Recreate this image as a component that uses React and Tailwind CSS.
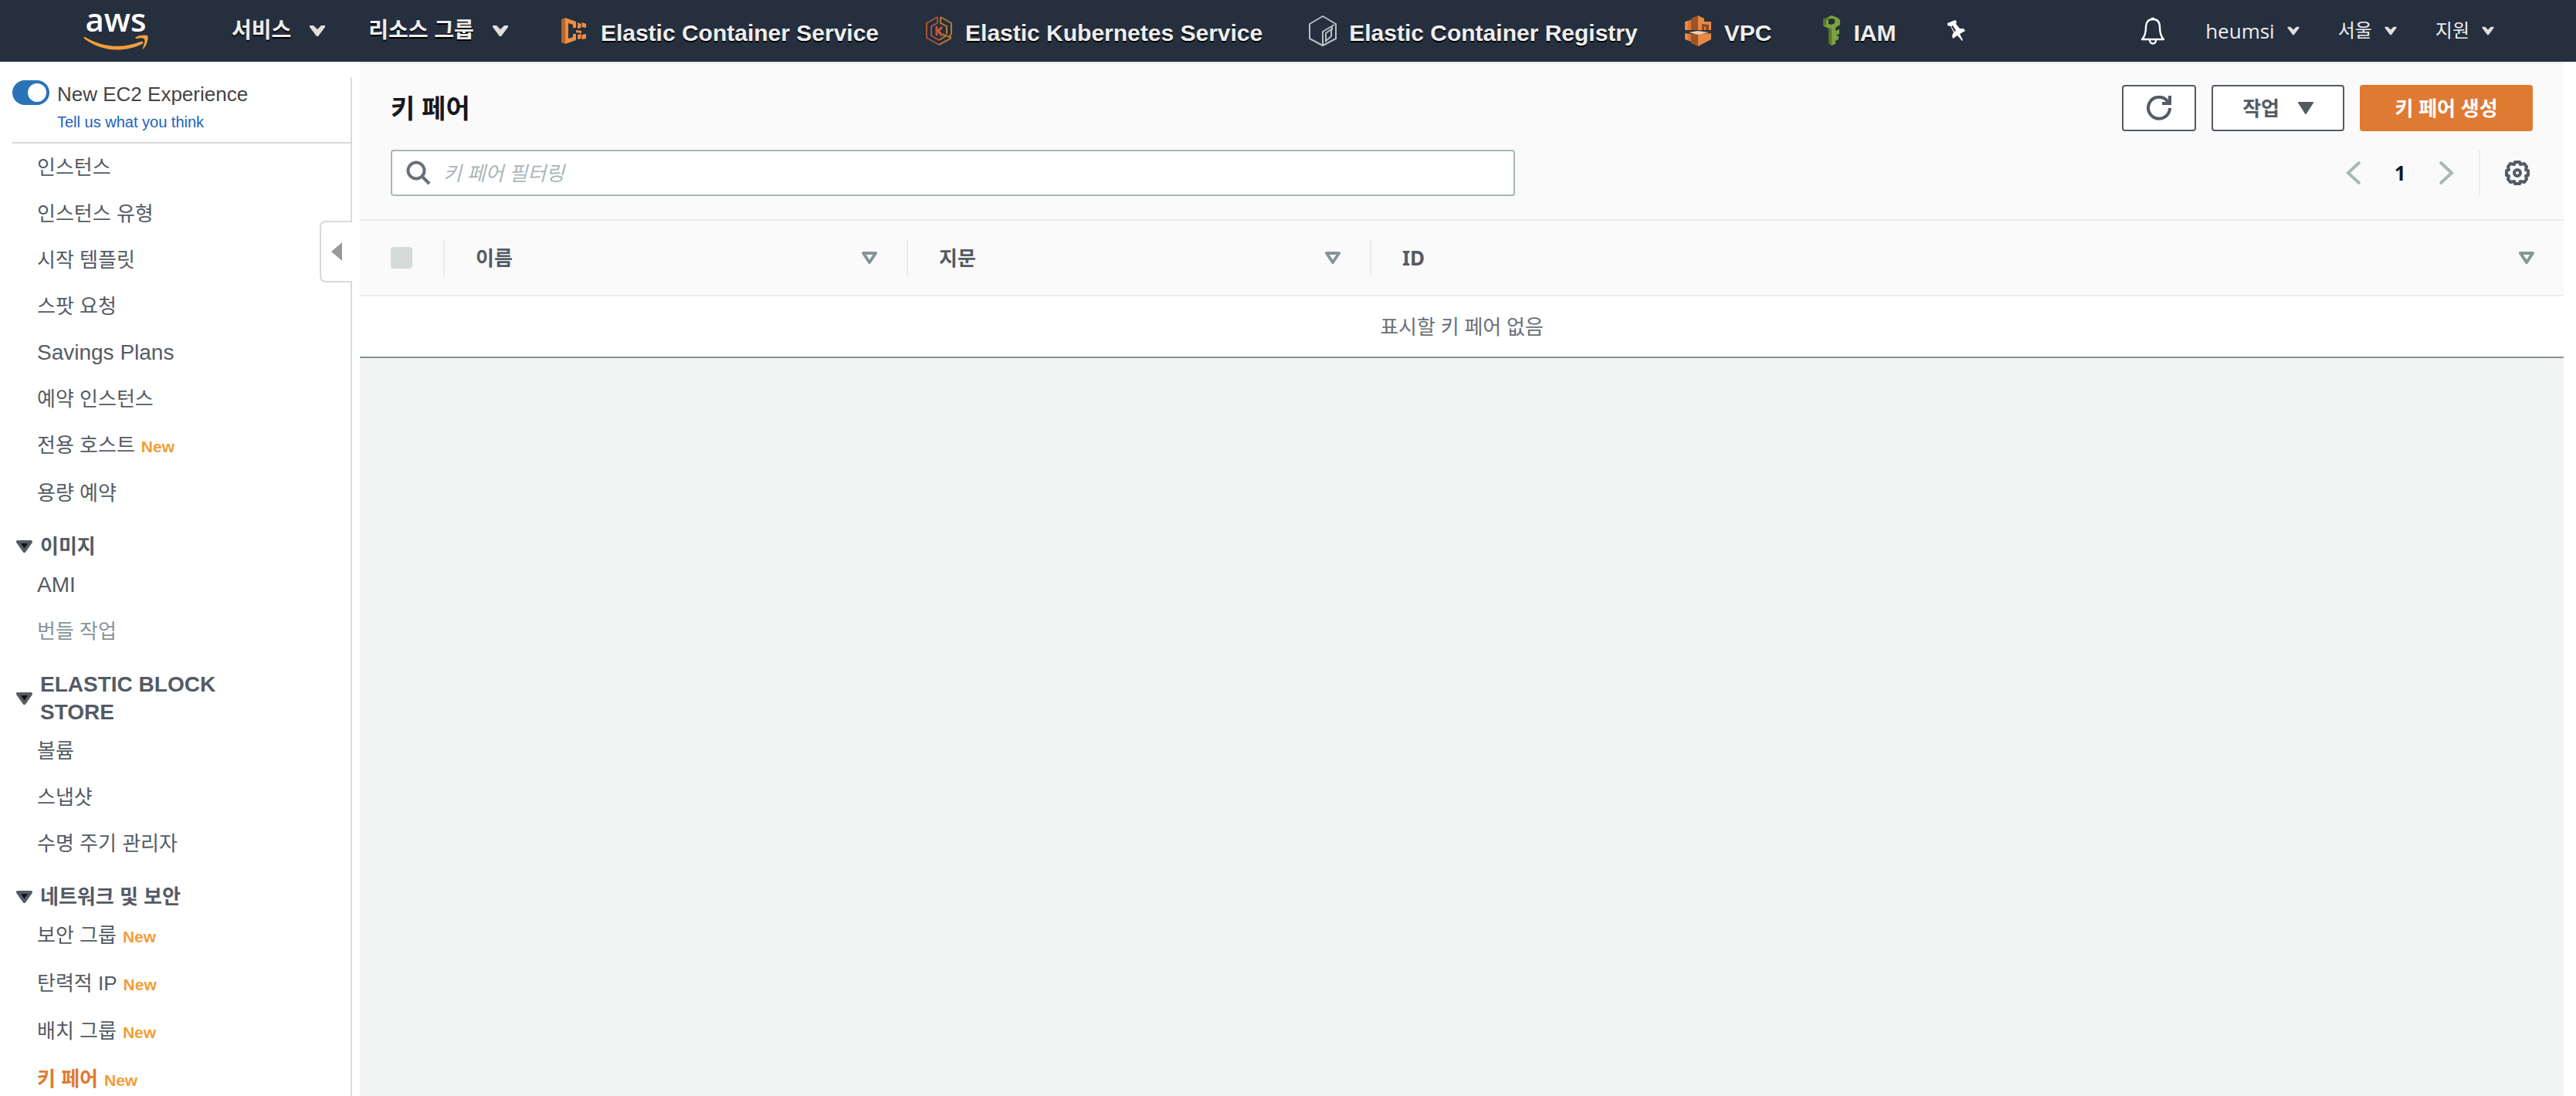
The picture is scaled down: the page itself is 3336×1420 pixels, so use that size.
import React from 'react';

const cjk = 'font-["Liberation_Sans","Noto_Sans_CJK_KR",sans-serif]';

function Caret({ small }) {
  return (
    <svg className={small ? 'h-3 w-4' : 'h-4 w-5'} viewBox="0 0 20 16" fill="#e0e0e0" aria-hidden="true">
      <path d="M0 1H5L10 6L15 1H20V3L11 15H9L0 3Z" />
    </svg>
  );
}

function AwsLogo() {
  return (
    <div className="flex h-20 w-[84px] flex-col items-center" aria-label="aws">
      <span className="h-[44px] font-['Open_Sans',sans-serif] text-[42px] font-semibold leading-[50px] text-white">aws</span>
      <svg className="h-6 w-[84px]" viewBox="0 0 84 24" fill="#f19e38" aria-hidden="true">
        <path d="M2 4C26 18 51 19 74 10C77 9 79 11 76 13C54 24 24 24 1 6C0 5 1 3 2 4Z" />
        <path d="M68 4C72 1 80 1 83 2C85 5 82 15 78 19C77 20 76 19 77 18C79 12 80 8 79 7C78 5 74 5 69 6C67 6 67 5 68 4Z" />
      </svg>
    </div>
  );
}

function EcsIcon() {
  return (
    <svg className="h-9 w-9" viewBox="0 0 36 36" aria-hidden="true">
      <path d="M1 3L6 1V35L1 33Z" fill="#b9642b" />
      <path d="M6 1L20 6V14H16V10L10 8V28L16 26V22H20V30L6 35Z" fill="#ef8d44" />
      <path d="M22 7L26 9V14L22 15ZM28 7L33 9V14L28 13ZM20 17L27 18V21L20 20ZM22 23L26 22V28L22 29ZM28 23L33 22V28L28 29Z" fill="#ef8d44" />
      <path d="M26 9L28 7V13L26 14ZM26 22L28 23V29L26 28Z" fill="#a4572a" />
    </svg>
  );
}

function EksIcon() {
  return (
    <svg className="h-10 w-9" viewBox="0 0 36 40" fill="none" strokeWidth="2" aria-hidden="true">
      <path d="M16 2L2 10V29L18 38" stroke="#a4553a" />
      <path d="M20 2L34 10V24L31 28L26 25M18 38L33 30V27" stroke="#b5772f" />
      <path d="M16 2V10L8 14V26L18 32" stroke="#a4553a" />
      <path d="M20 2V10L28 14V24M18 32L26 27L23 24" stroke="#b5772f" />
      <path d="M15 14V26" stroke="#c9502f" strokeWidth="3" />
      <path d="M22 15L17 20L22 26" stroke="#c9602f" strokeWidth="3" />
    </svg>
  );
}

function EcrIcon() {
  return (
    <svg className="h-10 w-9" viewBox="2 0 36 40" fill="none" stroke="#b9bec5" strokeWidth="2" strokeLinejoin="round" aria-hidden="true">
      <path d="M20 1L37 11V30L20 39L3 30V11Z" />
      <path d="M20 38V21L35 12M24 34V23L31 18V27L23 34M32 14V19" />
    </svg>
  );
}

function VpcIcon() {
  return (
    <svg className="h-10 w-9" viewBox="0 0 36 40" aria-hidden="true">
      <path d="M1 8L9 6V19H1ZM18 0L26 4V8L35 8V19H18ZM1 23L9 24V34L1 31ZM18 24L35 23V31L18 40Z" fill="#ea8743" />
      <path d="M18 0L9 4V19H18ZM9 24H18V40L9 36Z" fill="#9b5429" />
      <path d="M5 7L9 6V19H5ZM5 24H9V34L5 32Z" fill="#d67638" />
      <path d="M23 11L32 12V19H28V15L26 14V19H23Z" fill="#8a4a25" />
      <path d="M1 20H35V22H1Z" fill="#3a3538" />
      <path d="M6 22L18 20L32 22L18 25Z" fill="#f3cdb3" />
    </svg>
  );
}

function IamIcon() {
  return (
    <svg className="h-10 w-6" viewBox="0 0 24 40" aria-hidden="true">
      <path fillRule="evenodd" d="M12 0L20 3L23 6V12L17 16V20L22 18V24L18 25L21 27V31L17 33V37L12 39L8 36V17L1 13V5ZM8 5V11L12 12L16 10V5L12 4Z" fill="#7ba03f" />
      <path d="M8 16L12 17V39L8 36ZM1 5L8 2V5L5 6V13L1 12Z" fill="#56762f" />
    </svg>
  );
}

function PinIcon() {
  return (
    <svg className="h-7 w-6" viewBox="0 0 24 28" fill="#fff" aria-hidden="true">
      <path d="M1 4L11 0L13 2L12 5L17 11L22 11L24 14L17 18L21 26L20 27L14 20L8 24L7 20L9 16L5 8L1 7Z" />
      <path d="M6 8L8 7L12 14L10 15Z" fill="#27303f" />
    </svg>
  );
}

const services = [
  ['Elastic Container Service', EcsIcon, 'mr-[60px]'],
  ['Elastic Kubernetes Service', EksIcon, 'mr-[60px]'],
  ['Elastic Container Registry', EcrIcon, 'mr-[60px]'],
  ['VPC', VpcIcon, 'mr-[66px]'],
  ['IAM', IamIcon, 'mr-[66px]'],
];

const shadow = '[text-shadow:0_2px_0_#000]';

function Header() {
  return (
    <header className={`flex h-20 shrink-0 items-center bg-[#252f3e] text-[#eee] ${cjk}`}>
      <a href="#home" className="ml-[108px] mr-[108px]"><AwsLogo /></a>
      <button className={`mr-14 flex items-center gap-6 text-[28px] font-bold ${shadow}`}>서비스 <Caret /></button>
      <button className={`mr-[68px] flex items-center gap-6 text-[28px] font-bold ${shadow}`}>리소스 그룹 <Caret /></button>
      {services.map(([name, Icon, gap]) => (
        <a key={name} href="#service" className={`flex items-center gap-4 whitespace-nowrap text-[30px] font-bold ${shadow} ${gap}`}>
          <Icon />
          <span className="pt-1">{name}</span>
        </a>
      ))}
      <button aria-label="Pin"><PinIcon /></button>
      <div className={`ml-auto mr-[106px] flex items-center text-[26px] ${shadow}`}>
        <button aria-label="Notifications" className="mr-[52px]">
          <svg className="h-9 w-8" viewBox="0 0 32 36" fill="none" stroke="#fff" strokeWidth="2.4" strokeLinejoin="round">
            <path d="M16 3C10 3 7 7 7 13C7 22 5 26 2 29H30C27 26 25 22 25 13C25 7 22 3 16 3Z" />
            <path d="M14 2H18M12 30C12 36 20 36 20 30" />
          </svg>
        </button>
        <button className="mr-[50px] flex items-center gap-4 font-['Open_Sans',sans-serif]">heumsi <Caret small /></button>
        <button className="mr-[50px] flex items-center gap-4 text-[24px]">서울 <Caret small /></button>
        <button className="flex items-center gap-4 text-[24px]">지원 <Caret small /></button>
      </div>
    </header>
  );
}

function NavItem({ label, latin, isNew, active, muted }) {
  const tone = active ? 'font-bold text-[#df7a32]' : muted ? 'text-[#879596]' : 'text-[#545b64]';
  return (
    <li className={isNew ? 'h-[62px]' : 'h-[60px]'}>
      <a href="#nav" className={`flex items-baseline gap-2 pl-12 leading-10 ${latin ? 'text-[28px]' : 'text-[26px]'} ${tone}`}>
        {label}
        {isNew && <span className="text-[21px] font-bold text-[#f29d38]">New</span>}
      </a>
    </li>
  );
}

function NavGroup({ title, latin, items }) {
  return (
    <section>
      {title && (
        <button className={`mb-3 mt-[11px] flex w-[330px] items-center gap-[10px] pl-[21px] text-left font-bold leading-9 text-[#545b64] ${latin ? 'text-[28px]' : 'text-[26px]'}`}>
          <svg className="h-4 w-[21px] shrink-0" viewBox="0 0 21 16" aria-hidden="true">
            <path d="M2 2H19L10.5 14Z" fill="#111" stroke="#545b64" strokeWidth="4" strokeLinejoin="round" />
          </svg>
          {title}
        </button>
      )}
      <ul>
        {items.map((item) => <NavItem key={item.label} {...item} />)}
      </ul>
    </section>
  );
}

const groups = [
  {
    items: [
      { label: '인스턴스' }, { label: '인스턴스 유형' }, { label: '시작 템플릿' }, { label: '스팟 요청' },
      { label: 'Savings Plans', latin: true }, { label: '예약 인스턴스' }, { label: '전용 호스트', isNew: true }, { label: '용량 예약' },
    ],
  },
  { title: '이미지', items: [{ label: 'AMI', latin: true }, { label: '번들 작업', muted: true }] },
  { title: 'ELASTIC BLOCK STORE', latin: true, items: [{ label: '볼륨' }, { label: '스냅샷' }, { label: '수명 주기 관리자' }] },
  {
    title: '네트워크 및 보안',
    items: [
      { label: '보안 그룹', isNew: true }, { label: '탄력적 IP', isNew: true },
      { label: '배치 그룹', isNew: true }, { label: '키 페어', isNew: true, active: true },
    ],
  },
];

function Sidebar() {
  return (
    <aside className={`relative mr-[10px] mt-5 w-[456px] shrink-0 border-r-2 border-[#d9d9d9] bg-white ${cjk}`}>
      <div className="ml-4 flex h-[86px] items-start gap-[10px] border-b-2 border-[#d9d9d9] pt-1">
        <input
          id="experience"
          type="checkbox"
          role="switch"
          defaultChecked
          className="h-8 w-12 shrink-0 appearance-none rounded-full bg-[#2b73b7] before:ml-5 before:mt-1 before:block before:size-6 before:rounded-full before:bg-white"
        />
        <div>
          <label htmlFor="experience" className="block text-[26px] leading-9 text-[#444]">New EC2 Experience</label>
          <a href="#feedback" className="block text-[20px] leading-9 text-[#1b62c0]">Tell us what you think</a>
        </div>
      </div>
      <nav className="pt-[11px]">
        {groups.map((group, i) => <NavGroup key={i} {...group} />)}
      </nav>
      <button aria-label="Collapse" className="absolute -right-0.5 top-[186px] flex h-20 w-[42px] items-center justify-center rounded-l-lg border-2 border-r-0 border-[#d9d9d9] bg-white">
        <svg className="h-6 w-4" viewBox="0 0 16 24" fill="#999"><path d="M15 0V24L1 12Z" /></svg>
      </button>
    </aside>
  );
}

function SortIcon() {
  return (
    <svg className="h-4 w-5" viewBox="0 0 20 16" fill="none" stroke="#879596" strokeWidth="4" strokeLinejoin="round">
      <path d="M2 2H18L10 14Z" />
    </svg>
  );
}

function HeadCell({ label, width }) {
  return (
    <th scope="col" className={`py-6 font-bold ${width || ''}`}>
      <div className="flex h-12 items-center justify-between border-l-2 border-[#eaeded] pl-10 pr-[38px]">
        {label}
        <button aria-label={`${label} 정렬`}><SortIcon /></button>
      </div>
    </th>
  );
}

function KeyPairs() {
  return (
    <main className='mr-4 flex min-w-0 grow flex-col bg-[#f2f4f4] font-["Noto_Sans","Noto_Sans_CJK_KR",sans-serif]'>
      <section className="border-t-2 border-[#eaeded] bg-[#fafafa] text-[#545b64]">
        <div className="flex items-center gap-5 px-10 pt-7">
          <h1 className="grow text-[34px] font-bold leading-[60px] text-[#16191f]">키 페어</h1>
          <button aria-label="새로 고침" className="flex h-[60px] w-24 items-center justify-center rounded-sm border-2 border-[#545b64] bg-white">
            <svg className="h-8 w-8" viewBox="0 0 32 32" fill="none" stroke="#545b64" strokeWidth="4">
              <path d="M30 16A14 14 0 1 1 25 5L30 10" /><path d="M30 0V10H20" />
            </svg>
          </button>
          <button className="flex h-[60px] w-[172px] items-center justify-center gap-6 rounded-sm border-2 border-[#545b64] bg-white text-[26px] font-bold">
            작업
            <svg className="h-4 w-5" viewBox="0 0 20 16" fill="#545b64" stroke="#545b64" strokeWidth="2" strokeLinejoin="round"><path d="M1 1H19L10 15Z" /></svg>
          </button>
          <button className="h-[60px] w-56 rounded-sm bg-[#df7a32] text-[26px] font-bold text-white">키 페어 생성</button>
        </div>
        <div className="flex items-center justify-between px-10 pb-[30px] pt-6">
          <label className="flex h-[60px] w-[52.5%] items-center gap-4 rounded-sm border-2 border-[#aab7b8] bg-white pl-[18px]">
            <svg className="h-8 w-8" viewBox="0 0 32 32" fill="none" stroke="#687078" strokeWidth="4"><circle cx="13" cy="13" r="10.5" /><path d="M20 20L30 30" /></svg>
            <input aria-label="키 페어 필터링" placeholder="키 페어 필터링" className="min-w-0 grow text-[26px] italic outline-none placeholder:text-[#aab7b8]" />
          </label>
          <div className="flex h-[60px] items-center">
            <button aria-label="이전">
              <svg className="h-8 w-5" viewBox="0 0 20 32" fill="none" stroke="#aab7b8" strokeWidth="4"><path d="M18 2L3 16L18 30" /></svg>
            </button>
            <span className="w-[100px] text-center text-[26px] font-bold text-[#16191f]">1</span>
            <button aria-label="다음">
              <svg className="h-8 w-5" viewBox="0 0 20 32" fill="none" stroke="#aab7b8" strokeWidth="4"><path d="M2 2L17 16L2 30" /></svg>
            </button>
            <button aria-label="설정" className="ml-8 flex h-[60px] items-center border-l-2 border-[#eaeded] pl-8 pr-1">
              <svg className="h-8 w-8" viewBox="0 0 32 32" fill="none" stroke="#545b64" strokeWidth="4" strokeLinejoin="round">
                <path d="M13 2H19L20 5L25 4L28 8L27 12L30 13V19L27 20L28 24L25 28L20 27L19 30H13L12 27L7 28L4 24L5 20L2 19V13L5 12L4 8L7 4L12 5Z" />
                <circle cx="16" cy="16" r="4" />
              </svg>
            </button>
          </div>
        </div>
        <table className="w-full table-fixed border-b-2 border-[#879596] text-left text-[26px]">
          <thead className="border-y-2 border-[#eaeded]">
            <tr>
              <th className="w-[108px] pl-10">
                <input type="checkbox" disabled aria-label="모두 선택" className="block size-7 appearance-none rounded-sm bg-[#d5dbdb]" />
              </th>
              <HeadCell label="이름" width="w-[600px]" />
              <HeadCell label="지문" width="w-[600px]" />
              <HeadCell label="ID" />
            </tr>
          </thead>
          <tbody>
            <tr><td colSpan={4} className="h-20 bg-white text-center text-[#687078]">표시할 키 페어 없음</td></tr>
          </tbody>
        </table>
      </section>
    </main>
  );
}

export default function App() {
  return (
    <div className="flex h-screen flex-col overflow-hidden bg-white">
      <Header />
      <div className="flex min-h-0 grow">
        <Sidebar />
        <KeyPairs />
      </div>
    </div>
  );
}
